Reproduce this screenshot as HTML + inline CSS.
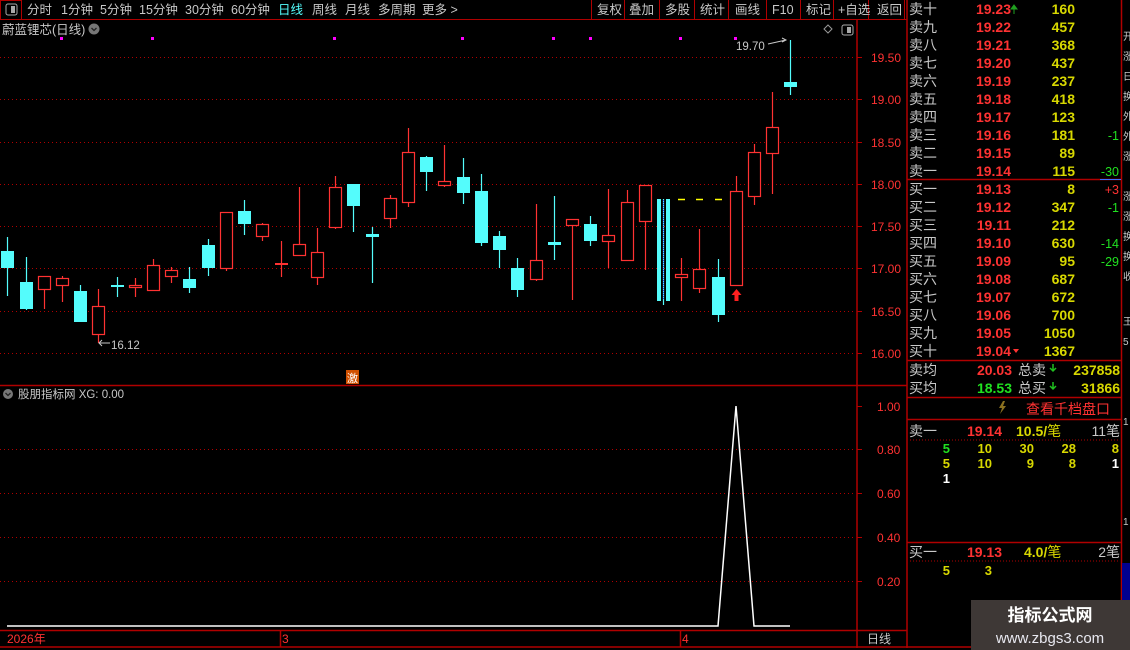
<!DOCTYPE html>
<html><head><meta charset="utf-8"><style>
html,body{margin:0;padding:0;background:#000;width:1130px;height:650px;overflow:hidden}
svg{display:block}
text{font-family:"Liberation Sans","Noto Sans CJK SC",sans-serif}
</style></head><body>
<svg width="1130" height="650" viewBox="0 0 1130 650" xmlns="http://www.w3.org/2000/svg">
<rect width="1130" height="650" fill="#000"/>
<!-- top bar -->
<g stroke="#b00000" fill="none" stroke-width="1">
<line x1="0" y1="19.5" x2="907" y2="19.5"/>
<rect x="0.5" y="0.5" width="21" height="19"/>
<line x1="591.5" y1="0" x2="591.5" y2="19"/><line x1="624.5" y1="0" x2="624.5" y2="19"/><line x1="659.5" y1="0" x2="659.5" y2="19"/><line x1="694.5" y1="0" x2="694.5" y2="19"/><line x1="728.5" y1="0" x2="728.5" y2="19"/><line x1="766.5" y1="0" x2="766.5" y2="19"/><line x1="800.5" y1="0" x2="800.5" y2="19"/><line x1="833.5" y1="0" x2="833.5" y2="19"/><line x1="868.5" y1="0" x2="868.5" y2="19"/><line x1="904.5" y1="0" x2="904.5" y2="19"/>
</g>
<rect x="6" y="4" width="11" height="11" rx="2" fill="none" stroke="#aaa"/><rect x="11" y="6" width="4" height="7" fill="#aaa"/>
<g font-size="12.5" fill="#c8c8c8">
<text x="27" y="14">分时</text><text x="61" y="14">1分钟</text><text x="100" y="14">5分钟</text><text x="139" y="14">15分钟</text><text x="185" y="14">30分钟</text><text x="231" y="14">60分钟</text><text x="278" y="14" fill="#54fcfc">日线</text><text x="312" y="14">周线</text><text x="345" y="14">月线</text><text x="378" y="14">多周期</text><text x="422" y="14">更多 &gt;</text>
<text x="597" y="14">复权</text><text x="629" y="14">叠加</text><text x="665" y="14">多股</text><text x="700" y="14">统计</text><text x="735" y="14">画线</text><text x="772" y="14">F10</text><text x="806" y="14">标记</text><text x="838" y="14">+自选</text><text x="877" y="14">返回</text>
<text x="2" y="34">蔚蓝锂芯(日线)</text>
</g>
<circle cx="94" cy="29" r="5.5" fill="#777"/><path d="M91.5 28 l2.5 2.5 l2.5 -2.5" stroke="#222" fill="none" stroke-width="1.3"/>
<path d="M828 25 l4 4 l-4 4 l-4 -4z" fill="none" stroke="#999"/>
<rect x="842" y="25" width="11" height="10" rx="2" fill="none" stroke="#aaa"/><rect x="847" y="27" width="4" height="6" fill="#aaa"/>
<!-- magenta dots -->
<g fill="#ff00ff"><rect x="60" y="37" width="3" height="3"/><rect x="151" y="37" width="3" height="3"/><rect x="333" y="37" width="3" height="3"/><rect x="461" y="37" width="3" height="3"/><rect x="552" y="37" width="3" height="3"/><rect x="589" y="37" width="3" height="3"/><rect x="679" y="37" width="3" height="3"/><rect x="734" y="37" width="3" height="3"/></g>
<!-- grid -->
<g stroke="#b00000" stroke-dasharray="1 3" stroke-width="1">
<line x1="0" y1="57.5" x2="856" y2="57.5"/><line x1="0" y1="99.5" x2="856" y2="99.5"/><line x1="0" y1="142.5" x2="856" y2="142.5"/><line x1="0" y1="184.5" x2="856" y2="184.5"/><line x1="0" y1="226.5" x2="856" y2="226.5"/><line x1="0" y1="268.5" x2="856" y2="268.5"/><line x1="0" y1="311.5" x2="856" y2="311.5"/><line x1="0" y1="353.5" x2="856" y2="353.5"/>
<line x1="0" y1="449.5" x2="856" y2="449.5"/><line x1="0" y1="493.5" x2="856" y2="493.5"/><line x1="0" y1="537.5" x2="856" y2="537.5"/><line x1="0" y1="581.5" x2="856" y2="581.5"/>
</g>
<!-- axis -->
<g stroke="#b00000" stroke-width="1.5" fill="none">
<line x1="857" y1="20" x2="857" y2="648"/>
<line x1="907" y1="0" x2="907" y2="648"/>
<line x1="0" y1="385.5" x2="907" y2="385.5"/>
<line x1="0" y1="630.5" x2="907" y2="630.5"/>
<line x1="0" y1="647" x2="1122" y2="647"/>
<line x1="280.5" y1="631" x2="280.5" y2="647"/><line x1="680.5" y1="631" x2="680.5" y2="647"/>
</g>
<g stroke="#b00000"><line x1="857" y1="57.5" x2="862" y2="57.5"/><line x1="857" y1="99.5" x2="862" y2="99.5"/><line x1="857" y1="142.5" x2="862" y2="142.5"/><line x1="857" y1="184.5" x2="862" y2="184.5"/><line x1="857" y1="226.5" x2="862" y2="226.5"/><line x1="857" y1="268.5" x2="862" y2="268.5"/><line x1="857" y1="311.5" x2="862" y2="311.5"/><line x1="857" y1="353.5" x2="862" y2="353.5"/>
<line x1="857" y1="406.5" x2="862" y2="406.5"/><line x1="857" y1="449.5" x2="862" y2="449.5"/><line x1="857" y1="493.5" x2="862" y2="493.5"/><line x1="857" y1="537.5" x2="862" y2="537.5"/><line x1="857" y1="581.5" x2="862" y2="581.5"/></g>
<g font-size="12" fill="#ff3232">
<text x="871" y="62">19.50</text><text x="871" y="104">19.00</text><text x="871" y="147">18.50</text><text x="871" y="189">18.00</text><text x="871" y="231">17.50</text><text x="871" y="273">17.00</text><text x="871" y="316">16.50</text><text x="871" y="358">16.00</text>
<text x="877" y="411">1.00</text><text x="877" y="454">0.80</text><text x="877" y="498">0.60</text><text x="877" y="542">0.40</text><text x="877" y="586">0.20</text>
<text x="7" y="643">2026年</text><text x="282" y="643">3</text><text x="682" y="643">4</text>
</g>
<text x="867" y="643" font-size="12" fill="#c8c8c8">日线</text>
<!-- candles -->
<g stroke="#54fcfc" stroke-width="1.2">
<line x1="7.5" y1="237" x2="7.5" y2="296"/><line x1="26.5" y1="257" x2="26.5" y2="310"/><line x1="80.5" y1="285" x2="80.5" y2="291"/><line x1="117.5" y1="277" x2="117.5" y2="297"/><line x1="189.5" y1="267" x2="189.5" y2="293"/><line x1="208.5" y1="239" x2="208.5" y2="276"/><line x1="244.5" y1="200" x2="244.5" y2="235"/><line x1="353.5" y1="184" x2="353.5" y2="232"/><line x1="372.5" y1="227" x2="372.5" y2="283"/><line x1="426.5" y1="156" x2="426.5" y2="191"/><line x1="463.5" y1="158" x2="463.5" y2="204"/><line x1="481.5" y1="174" x2="481.5" y2="246"/><line x1="499.5" y1="231" x2="499.5" y2="268"/><line x1="517.5" y1="258" x2="517.5" y2="297"/><line x1="554.5" y1="196" x2="554.5" y2="260"/><line x1="590.5" y1="216" x2="590.5" y2="246"/><line x1="663.5" y1="199" x2="663.5" y2="305"/><line x1="718.5" y1="259" x2="718.5" y2="322"/><line x1="790.5" y1="40" x2="790.5" y2="95"/>
</g>
<g fill="#54fcfc">
<rect x="1" y="251" width="13" height="17"/><rect x="20" y="282" width="13" height="27"/><rect x="74" y="291" width="13" height="31"/><rect x="111" y="285" width="13" height="2"/><rect x="183" y="279" width="13" height="9"/><rect x="202" y="245" width="13" height="23"/><rect x="238" y="211" width="13" height="13"/><rect x="347" y="184" width="13" height="22"/><rect x="366" y="234" width="13" height="3"/><rect x="420" y="157" width="13" height="15"/><rect x="457" y="177" width="13" height="16"/><rect x="475" y="191" width="13" height="52"/><rect x="493" y="236" width="13" height="14"/><rect x="511" y="268" width="13" height="22"/><rect x="548" y="242" width="13" height="3"/><rect x="584" y="224" width="13" height="17"/><rect x="657" y="199" width="4" height="102"/><rect x="666" y="199" width="4" height="102"/><rect x="712" y="277" width="13" height="38"/><rect x="784" y="82" width="13" height="5"/>
</g>
<line x1="663.5" y1="200" x2="663.5" y2="300" stroke="#2040ff" stroke-dasharray="1 1"/>
<g stroke="#ff3232" stroke-width="1.2" fill="none">
<line x1="44.5" y1="290" x2="44.5" y2="309"/><rect x="38.5" y="276.5" width="12" height="13"/>
<line x1="62.5" y1="276" x2="62.5" y2="302"/><rect x="56.5" y="278.5" width="12" height="7" fill="#000"/>
<line x1="98.5" y1="289" x2="98.5" y2="343"/><rect x="92.5" y="306.5" width="12" height="28" fill="#000"/>
<line x1="135.5" y1="278" x2="135.5" y2="297"/><rect x="129.5" y="285.5" width="12" height="2" fill="#000"/>
<line x1="153.5" y1="259" x2="153.5" y2="291"/><rect x="147.5" y="265.5" width="12" height="25" fill="#000"/>
<line x1="171.5" y1="267" x2="171.5" y2="283"/><rect x="165.5" y="270.5" width="12" height="6" fill="#000"/>
<line x1="226.5" y1="268" x2="226.5" y2="271"/><rect x="220.5" y="212.5" width="12" height="56" fill="#000"/>
<line x1="262.5" y1="223" x2="262.5" y2="241"/><rect x="256.5" y="224.5" width="12" height="12" fill="#000"/>
<line x1="281.5" y1="241" x2="281.5" y2="277"/><line x1="275" y1="264" x2="288" y2="264" stroke-width="2"/>
<line x1="299.5" y1="187" x2="299.5" y2="256"/><rect x="293.5" y="244.5" width="12" height="11" fill="#000"/>
<line x1="317.5" y1="228" x2="317.5" y2="285"/><rect x="311.5" y="252.5" width="12" height="25" fill="#000"/>
<line x1="335.5" y1="176" x2="335.5" y2="229"/><rect x="329.5" y="187.5" width="12" height="40" fill="#000"/>
<line x1="390.5" y1="195" x2="390.5" y2="228"/><rect x="384.5" y="198.5" width="12" height="20" fill="#000"/>
<line x1="408.5" y1="128" x2="408.5" y2="207"/><rect x="402.5" y="152.5" width="12" height="50" fill="#000"/>
<line x1="444.5" y1="145" x2="444.5" y2="187"/><rect x="438.5" y="181.5" width="12" height="4" fill="#000"/>
<line x1="536.5" y1="204" x2="536.5" y2="281"/><rect x="530.5" y="260.5" width="12" height="19" fill="#000"/>
<line x1="572.5" y1="219" x2="572.5" y2="300"/><rect x="566.5" y="219.5" width="12" height="6" fill="#000"/>
<line x1="608.5" y1="189" x2="608.5" y2="268"/><rect x="602.5" y="235.5" width="12" height="6" fill="#000"/>
<line x1="627.5" y1="190" x2="627.5" y2="202"/><rect x="621.5" y="202.5" width="12" height="58" fill="#000"/>
<line x1="645.5" y1="221" x2="645.5" y2="270"/><rect x="639.5" y="185.5" width="12" height="36" fill="#000"/>
<line x1="681.5" y1="258" x2="681.5" y2="301"/><rect x="675.5" y="274.5" width="12" height="3" fill="#000"/>
<line x1="699.5" y1="229" x2="699.5" y2="293"/><rect x="693.5" y="269.5" width="12" height="19" fill="#000"/>
<line x1="736.5" y1="176" x2="736.5" y2="191"/><rect x="730.5" y="191.5" width="12" height="94" fill="#000"/>
<line x1="754.5" y1="144" x2="754.5" y2="205"/><rect x="748.5" y="152.5" width="12" height="44" fill="#000"/>
<line x1="772.5" y1="92" x2="772.5" y2="194"/><rect x="766.5" y="127.5" width="12" height="26" fill="#000"/>
</g>
<path d="M736.5 289 l-5 6 h3 v6 h4 v-6 h3z" fill="#ff2020"/>
<g stroke="#ffff00" stroke-width="1.5"><line x1="678" y1="199.5" x2="685" y2="199.5"/><line x1="696" y1="199.5" x2="703" y2="199.5"/><line x1="715" y1="199.5" x2="722" y2="199.5"/></g>
<text x="736" y="50" font-size="11.5" fill="#c8c8c8">19.70</text>
<path d="M768 44 L786 40 M782 38 l4 2 l-4 2" stroke="#c8c8c8" fill="none"/>
<text x="111" y="349" font-size="11.5" fill="#c8c8c8">16.12</text>
<path d="M110 343 H99 M102 340 l-3 3 l3 3" stroke="#c8c8c8" fill="none"/>
<rect x="346" y="370" width="13" height="14" fill="#d05000"/><text x="347" y="382" font-size="11" fill="#fff">激</text>
<!-- indicator -->
<circle cx="8" cy="394" r="5" fill="#777"/><path d="M5.5 393 l2.5 2.5 l2.5 -2.5" stroke="#222" fill="none" stroke-width="1.3"/>
<text x="18" y="398" font-size="11.5" fill="#c8c8c8">股朋指标网 XG: 0.00</text>
<polyline points="7,626 718,626 736,406 754,626 790,626" stroke="#fff" fill="none" stroke-width="1.5"/>
<!-- right panel -->
<g stroke="#b00000" stroke-width="1.5">
<line x1="1121.5" y1="0" x2="1121.5" y2="648"/>
<line x1="907" y1="179.5" x2="1121" y2="179.5"/>
<line x1="907" y1="360.5" x2="1121" y2="360.5"/>
<line x1="907" y1="397.5" x2="1121" y2="397.5"/>
<line x1="907" y1="419.5" x2="1121" y2="419.5"/>
<line x1="907" y1="542.5" x2="1121" y2="542.5"/>
</g>
<line x1="1100" y1="179.5" x2="1121" y2="179.5" stroke="#4070ff"/>
<g stroke="#b00000" stroke-dasharray="1 2"><line x1="910" y1="440" x2="1120" y2="440"/><line x1="910" y1="561" x2="1120" y2="561"/></g>
<g font-size="14">
<g fill="#c8c8c8">
<text x="909" y="14">卖十</text><text x="909" y="32">卖九</text><text x="909" y="50">卖八</text><text x="909" y="68">卖七</text><text x="909" y="86">卖六</text><text x="909" y="104">卖五</text><text x="909" y="122">卖四</text><text x="909" y="140">卖三</text><text x="909" y="158">卖二</text><text x="909" y="176">卖一</text>
<text x="909" y="194">买一</text><text x="909" y="212">买二</text><text x="909" y="230">买三</text><text x="909" y="248">买四</text><text x="909" y="266">买五</text><text x="909" y="284">买六</text><text x="909" y="302">买七</text><text x="909" y="320">买八</text><text x="909" y="338">买九</text><text x="909" y="356">买十</text>
<text x="909" y="375">卖均</text><text x="909" y="393">买均</text><text x="1018" y="375">总卖</text><text x="1018" y="393">总买</text>
<text x="909" y="436">卖一</text><text x="909" y="557">买一</text>
<text x="1120" y="436" text-anchor="end">11笔</text><text x="1120" y="557" text-anchor="end">2笔</text>
</g>
<g fill="#ff3232" font-weight="bold" text-anchor="end">
<text x="1011" y="14">19.23</text><text x="1011" y="32">19.22</text><text x="1011" y="50">19.21</text><text x="1011" y="68">19.20</text><text x="1011" y="86">19.19</text><text x="1011" y="104">19.18</text><text x="1011" y="122">19.17</text><text x="1011" y="140">19.16</text><text x="1011" y="158">19.15</text><text x="1011" y="176">19.14</text>
<text x="1011" y="194">19.13</text><text x="1011" y="212">19.12</text><text x="1011" y="230">19.11</text><text x="1011" y="248">19.10</text><text x="1011" y="266">19.09</text><text x="1011" y="284">19.08</text><text x="1011" y="302">19.07</text><text x="1011" y="320">19.06</text><text x="1011" y="338">19.05</text><text x="1011" y="356">19.04</text>
<text x="1012" y="375">20.03</text><text x="1002" y="436">19.14</text><text x="1002" y="557">19.13</text>
</g>
<text x="1012" y="393" fill="#20e020" font-weight="bold" text-anchor="end">18.53</text>
<g fill="#d8d800" font-weight="bold" text-anchor="end">
<text x="1075" y="14">160</text><text x="1075" y="32">457</text><text x="1075" y="50">368</text><text x="1075" y="68">437</text><text x="1075" y="86">237</text><text x="1075" y="104">418</text><text x="1075" y="122">123</text><text x="1075" y="140">181</text><text x="1075" y="158">89</text><text x="1075" y="176">115</text>
<text x="1075" y="194">8</text><text x="1075" y="212">347</text><text x="1075" y="230">212</text><text x="1075" y="248">630</text><text x="1075" y="266">95</text><text x="1075" y="284">687</text><text x="1075" y="302">672</text><text x="1075" y="320">700</text><text x="1075" y="338">1050</text><text x="1075" y="356">1367</text>
<text x="1120" y="375">237858</text><text x="1120" y="393">31866</text>
</g>
<text x="1016" y="436" fill="#d8d800" font-weight="bold">10.5/<tspan font-weight="normal">笔</tspan></text>
<text x="1024" y="557" fill="#d8d800" font-weight="bold">4.0/<tspan font-weight="normal">笔</tspan></text>
<g font-size="12.5" text-anchor="end">
<text x="1119" y="140" fill="#20e020">-1</text><text x="1119" y="176" fill="#20e020">-30</text><text x="1119" y="194" fill="#ff3232">+3</text><text x="1119" y="212" fill="#20e020">-1</text><text x="1119" y="248" fill="#20e020">-14</text><text x="1119" y="266" fill="#20e020">-29</text>
</g>
<g font-size="13" font-weight="bold" text-anchor="end" fill="#d8d800">
<text x="950" y="453" fill="#20e020">5</text><text x="992" y="453">10</text><text x="1034" y="453">30</text><text x="1076" y="453">28</text><text x="1119" y="453">8</text>
<text x="950" y="468">5</text><text x="992" y="468">10</text><text x="1034" y="468">9</text><text x="1076" y="468">8</text><text x="1119" y="468" fill="#fff">1</text>
<text x="950" y="483" fill="#fff">1</text>
<text x="950" y="575">5</text><text x="992" y="575">3</text>
</g>
<text x="1026" y="414" fill="#ff3232">查看千档盘口</text>
</g>
<path d="M1003 401 l-4 7 h3 l-2 6 l6 -8 h-3 l2 -5z" fill="#8a7020"/>
<path d="M1014 5 l3 4 h-6z M1014 9 v5" fill="#20a020" stroke="#20a020"/>
<path d="M1016 353 l-3 -4 h6z" fill="#ff3232"/>
<path d="M1053 364 v7 M1050 368 l3 3 l3 -3" stroke="#20c020" fill="none" stroke-width="1.5"/>
<path d="M1053 382 v7 M1050 386 l3 3 l3 -3" stroke="#20c020" fill="none" stroke-width="1.5"/>
<!-- far right strip -->
<g font-size="10" fill="#c8c8c8">
<text x="1123" y="40">开</text><text x="1123" y="60">涨</text><text x="1123" y="80">日</text><text x="1123" y="100">换</text><text x="1123" y="120">外</text><text x="1123" y="140">外</text><text x="1123" y="160">涨</text><text x="1123" y="200">涨</text><text x="1123" y="220">涨</text><text x="1123" y="240">换</text><text x="1123" y="260">换</text><text x="1123" y="280">收</text><text x="1123" y="325">王</text><text x="1123" y="345">5</text><text x="1123" y="425">1</text><text x="1123" y="525">1</text>
</g>
<rect x="1122" y="563" width="8" height="40" fill="#000090"/>
<!-- watermark -->
<rect x="971" y="600" width="159" height="50" fill="#3e3836"/>
<text x="1050" y="621" font-size="17" font-weight="bold" fill="#fff" text-anchor="middle">指标公式网</text>
<text x="1050" y="643" font-size="15" fill="#e8e8f0" text-anchor="middle">www.zbgs3.com</text>
</svg>
</body></html>
